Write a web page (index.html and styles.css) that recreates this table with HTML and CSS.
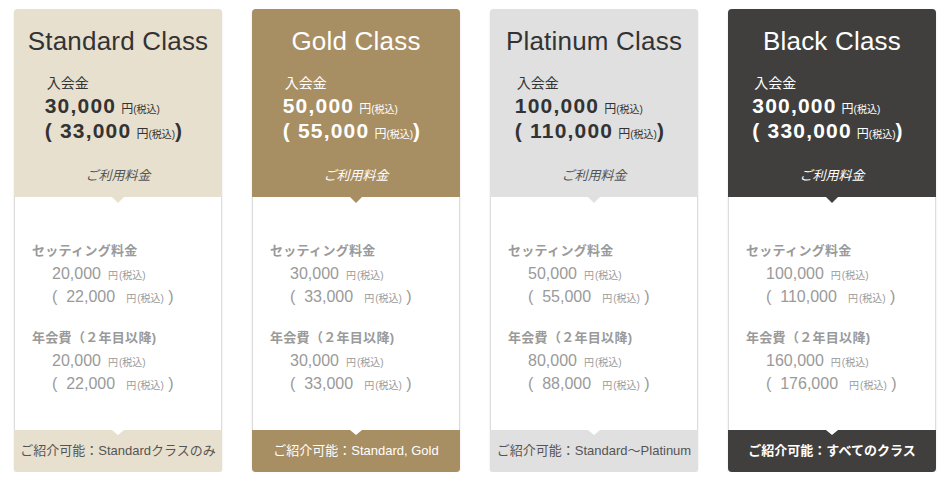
FILE: index.html
```html
<!DOCTYPE html>
<html lang="ja">
<head>
<meta charset="utf-8">
<title>Classes</title>
<link rel="stylesheet" href="styles.css">
</head>
<body>
<div class="cards">
  <section class="card standard">
    <div class="head">
      <h2 class="title">Standard Class</h2>
      <div class="fee">
        <p class="fee-label">入会金</p>
        <p class="fee-val">30,000<span class="yen">円</span><span class="tax">(税込)</span></p>
        <p class="fee-val">(&nbsp;33,000<span class="yen">円</span><span class="tax">(税込)</span>)</p>
      </div>
      <p class="usage">ご利用料金</p>
    </div>
    <div class="body">
      <p class="lab">セッティング料金</p>
      <p class="val">20,000<span class="yen">円</span><span class="tax">(税込)</span></p>
      <p class="val">(&nbsp;&nbsp;22,000<span class="yen wide">円</span><span class="tax">(税込)</span>&nbsp;)</p>
      <p class="lab second">年会費（２年目以降)</p>
      <p class="val">20,000<span class="yen">円</span><span class="tax">(税込)</span></p>
      <p class="val">(&nbsp;&nbsp;22,000<span class="yen wide">円</span><span class="tax">(税込)</span>&nbsp;)</p>
    </div>
    <div class="foot">ご紹介可能：Standardクラスのみ</div>
  </section>

  <section class="card gold">
    <div class="head">
      <h2 class="title">Gold Class</h2>
      <div class="fee">
        <p class="fee-label">入会金</p>
        <p class="fee-val">50,000<span class="yen">円</span><span class="tax">(税込)</span></p>
        <p class="fee-val">(&nbsp;55,000<span class="yen">円</span><span class="tax">(税込)</span>)</p>
      </div>
      <p class="usage">ご利用料金</p>
    </div>
    <div class="body">
      <p class="lab">セッティング料金</p>
      <p class="val">30,000<span class="yen">円</span><span class="tax">(税込)</span></p>
      <p class="val">(&nbsp;&nbsp;33,000<span class="yen wide">円</span><span class="tax">(税込)</span>&nbsp;)</p>
      <p class="lab second">年会費（２年目以降)</p>
      <p class="val">30,000<span class="yen">円</span><span class="tax">(税込)</span></p>
      <p class="val">(&nbsp;&nbsp;33,000<span class="yen wide">円</span><span class="tax">(税込)</span>&nbsp;)</p>
    </div>
    <div class="foot">ご紹介可能：Standard, Gold</div>
  </section>

  <section class="card platinum">
    <div class="head">
      <h2 class="title">Platinum Class</h2>
      <div class="fee">
        <p class="fee-label">入会金</p>
        <p class="fee-val">100,000<span class="yen">円</span><span class="tax">(税込)</span></p>
        <p class="fee-val">(&nbsp;110,000<span class="yen">円</span><span class="tax">(税込)</span>)</p>
      </div>
      <p class="usage">ご利用料金</p>
    </div>
    <div class="body">
      <p class="lab">セッティング料金</p>
      <p class="val">50,000<span class="yen">円</span><span class="tax">(税込)</span></p>
      <p class="val">(&nbsp;&nbsp;55,000<span class="yen wide">円</span><span class="tax">(税込)</span>&nbsp;)</p>
      <p class="lab second">年会費（２年目以降)</p>
      <p class="val">80,000<span class="yen">円</span><span class="tax">(税込)</span></p>
      <p class="val">(&nbsp;&nbsp;88,000<span class="yen wide">円</span><span class="tax">(税込)</span>&nbsp;)</p>
    </div>
    <div class="foot">ご紹介可能：Standard～Platinum</div>
  </section>

  <section class="card black">
    <div class="head">
      <h2 class="title">Black Class</h2>
      <div class="fee">
        <p class="fee-label">入会金</p>
        <p class="fee-val">300,000<span class="yen">円</span><span class="tax">(税込)</span></p>
        <p class="fee-val">(&nbsp;330,000<span class="yen">円</span><span class="tax">(税込)</span>)</p>
      </div>
      <p class="usage">ご利用料金</p>
    </div>
    <div class="body">
      <p class="lab">セッティング料金</p>
      <p class="val">100,000<span class="yen">円</span><span class="tax">(税込)</span></p>
      <p class="val">(&nbsp;&nbsp;110,000<span class="yen wide">円</span><span class="tax">(税込)</span>&nbsp;)</p>
      <p class="lab second">年会費（２年目以降)</p>
      <p class="val">160,000<span class="yen">円</span><span class="tax">(税込)</span></p>
      <p class="val">(&nbsp;&nbsp;176,000<span class="yen wide">円</span><span class="tax">(税込)</span>&nbsp;)</p>
    </div>
    <div class="foot">ご紹介可能：すべてのクラス</div>
  </section>
</div>
</body>
</html>
```

FILE: styles.css
```css
* { box-sizing: border-box; margin: 0; padding: 0; }
html, body { background: #fff; }
body {
  font-family: "Liberation Sans", "Noto Sans CJK JP", sans-serif;
  padding: 9px 13px 0 14px;
  color: #333;
}
.cards {
  display: flex;
  gap: 30px;
}
.card {
  width: 208px;
  height: 463px;
  display: flex;
  flex-direction: column;
  border: 1px solid #dcdcdc;
  border-radius: 4px;
  box-shadow: 0 1px 2px rgba(0,0,0,0.12);
  background: #fff;
}
.head {
  position: relative;
  height: 188px;
  margin: -1px -1px 0;
  border-radius: 4px 4px 0 0;
  padding-top: 15px;
  text-align: center;
}
.head::after {
  content: "";
  position: absolute;
  left: 50%;
  bottom: -6px;
  margin-left: -6px;
  border-top: 6px solid var(--bg);
  border-left: 6px solid transparent;
  border-right: 6px solid transparent;
}
.title {
  font-weight: normal;
  font-size: 26px;
  line-height: 34px;
  letter-spacing: 0.2px;
}
.fee {
  display: inline-block;
  text-align: left;
  margin-top: 15px;
  padding-right: 10px;
  margin-left: 2px;
}
.fee-label {
  font-size: 14px;
  height: 20px;
  line-height: 20px;
  padding-left: 2px;
}
.fee-val {
  font-size: 21px;
  font-weight: bold;
  height: 25px;
  line-height: 25px;
  letter-spacing: 1.2px;
  white-space: nowrap;
}
.fee-val span { line-height: 1; }
.fee-val .yen {
  font-size: 12px;
  font-weight: normal;
  margin-left: 5px;
  letter-spacing: 0;
}
.fee-val .tax {
  font-size: 10px;
  font-weight: normal;
  letter-spacing: 0;
}
.usage {
  font-size: 13px;
  height: 20px;
  line-height: 20px;
  font-style: italic;
  margin-top: 23px;
  color: #555;
}
.body {
  flex: 1;
  padding: 43px 0 0 17px;
  color: #9a9a9a;
}
.lab {
  font-size: 13px;
  font-weight: bold;
  height: 22px;
  line-height: 22px;
  letter-spacing: 0.3px;
}
.lab.second { margin-top: 19px; }
.val {
  font-size: 16px;
  height: 23px;
  line-height: 23px;
  padding-left: 20px;
  white-space: nowrap;
}
.val span { line-height: 1; }
.val .yen {
  font-size: 10px;
  margin-left: 7px;
}
.val .yen.wide { margin-left: 11px; }
.val .tax {
  font-size: 10px;
  margin-left: 1px;
}
.foot {
  position: relative;
  height: 42px;
  margin: 0 -1px -1px;
  border-radius: 0 0 4px 4px;
  font-size: 13px;
  line-height: 42px;
  text-align: center;
  white-space: nowrap;
  color: #555;
}
.foot::before {
  content: "";
  position: absolute;
  left: 50%;
  top: 0;
  margin-left: -6px;
  border-top: 5px solid #fff;
  border-left: 6px solid transparent;
  border-right: 6px solid transparent;
}
.head, .foot { background: var(--bg); }

.standard { --bg: #e8e0ce; }
.standard .head, .standard .foot { color: #333; }
.standard .foot { color: #555; }

.gold { --bg: #a88e63; }
.gold .head, .gold .usage, .gold .foot { color: #fff; }

.platinum { --bg: #e0e0e0; }
.platinum .foot { color: #555; }

.black { --bg: #403f3e; }
.black .head, .black .usage, .black .foot { color: #fff; }
.black .foot { font-weight: bold; }
```
